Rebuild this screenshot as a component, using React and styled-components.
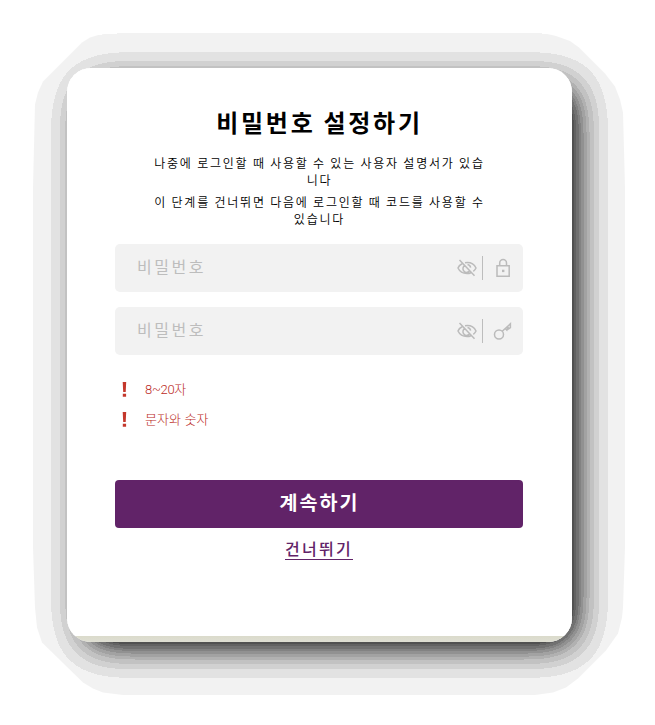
import React from 'react';
import styled, { createGlobalStyle } from 'styled-components';

const GlobalStyle = createGlobalStyle`
  * { box-sizing: border-box; }
  html, body { margin: 0; background: #fff; }
  body { font-family: "Noto Sans CJK KR", sans-serif; overflow: hidden; }
`;

const Page = styled.main`
  width: 655px;
  height: 725px;
  padding: 67.5px 0 0 67px;
  overflow: hidden;
  position: relative;
  z-index: 0;
`;

const Card = styled.section`
  position: relative;
  width: 504.5px;
  height: 574px;
  border-radius: 24px;

  &::before {
    content: "";
    position: absolute;
    inset: 0;
    z-index: -1;
    border-radius: 24px;
    box-shadow: 10px 10px 40px #000;
    filter: url(#shadow-steps);
    clip-path: polygon(
      -34px 120px, -32px 37px, -29px 25px, -24px 14px, 15px -25px, 23px -30px, 33px -33px, 46px -34.5px,
      476px -34.5px, 489px -31.5px, 503px -26.5px, 512px -20px, 538px 6px, 548px 19px, 553px 32px, 556px 45px, 558px 120px,
      558px 480px, 556px 540px, 555px 550px, 551px 566px, 539px 583px, 511px 611px, 499px 620px, 486px 625px, 468px 627.5px,
      56px 627.5px, 36px 625px, 26px 621px, 16px 615px, -25px 575px, -30px 560px, -32px 540px, -34px 480px
    );
  }
`;

const CardBody = styled.div`
  height: 100%;
  padding: 35.5px 48.5px 0 48px;
  border-radius: 24px;
  background: linear-gradient(#fff 568.5px, #dbdbcc 568.5px, #dfdfd3 100%);
  display: flex;
  flex-direction: column;
  align-items: stretch;
`;

const Title = styled.h1`
  margin: 0;
  height: 38px;
  line-height: 38px;
  font-size: 24px;
  font-weight: 700;
  letter-spacing: 2.7px;
  text-align: center;
  padding-left: 1px;
  color: #000;
`;

const Description = styled.p`
  margin: ${({ $first }) => ($first ? '13px' : '5px')} 0 0;
  padding-left: 1px;
  font-size: 12px;
  font-weight: 350;
  line-height: 17px;
  letter-spacing: 1.78px;
  text-align: center;
  white-space: nowrap;
  color: #000;
`;

const Fields = styled.div`
  margin-top: 17px;
  display: grid;
  gap: 15px;
`;

const Field = styled.label`
  height: 48px;
  border-radius: 5px;
  background: #f2f2f2;
  padding: 0 10px 0 22px;
  display: flex;
  align-items: center;
  color: #bcbcbc;
`;

const Input = styled.input`
  flex: 1;
  min-width: 0;
  height: 30px;
  padding: 0 0 4px;
  border: 0;
  outline: 0;
  background: transparent;
  font: 400 16px "Noto Sans CJK KR", sans-serif;
  letter-spacing: 2.5px;
  color: #555;

  &::placeholder { color: #bdbdbd; opacity: 1; }
`;

const Divider = styled.span`
  width: 1px;
  height: 24px;
  margin: 0 10px 0 5px;
  background: #bdbdbd;
`;

const Icon = styled.svg`
  width: 20px;
  height: 20px;
  flex: none;
  fill: none;
  stroke: #bbb;
  stroke-width: 1.5;
`;

const Rules = styled.ul`
  list-style: none;
  margin: 19px 0 0;
  padding: 0;
`;

const Rule = styled.li`
  height: 30px;
  display: flex;
  align-items: center;
  padding-left: 7px;
  gap: 18px;
  font-family: Roboto, "Noto Sans CJK KR", sans-serif;
  font-size: 13px;
  font-weight: 300;
  letter-spacing: ${({ $spacing }) => $spacing}px;
  color: #bb2a1d;
`;

const RuleText = styled.span`
  padding-bottom: 2px;
`;

const Bang = styled.svg`
  width: 5px;
  height: 15px;
  margin-top: 1px;
  fill: #c4382c;
`;

const Submit = styled.button`
  margin-top: 46px;
  height: 48px;
  border: 0;
  border-radius: 4px;
  padding: 0 0 5px 1px;
  background: #612368;
  color: #fff;
  font: 700 19.5px "Noto Sans CJK KR", sans-serif;
  letter-spacing: 2px;
`;

const Skip = styled.a`
  align-self: center;
  margin-top: 10px;
  height: 22px;
  line-height: 20px;
  border-bottom: 1px solid #612368;
  font-size: 16px;
  font-weight: 500;
  letter-spacing: 2.3px;
  color: #612368;
`;

const HiddenDefs = styled.svg`
  position: absolute;
  width: 0;
  height: 0;
`;

// Coverage at which each darker step of the card shadow begins.
const stops = [0.0078, 0.0926, 0.191, 0.274, 0.354, 0.411, 0.47, 0.52, 0.56, 0.608, 0.646, 0.7];
const shadowTable = Array.from({ length: 256 }, (_, i) => {
  const level = stops.filter((s) => i / 255 >= s).length;
  return level === 0 ? 0 : ((level * 16 - 2) / 255).toFixed(4);
}).join(' ');

const EyeOff = () => (
  <Icon viewBox="0 0 20 20">
    <path d="M5.500 5.500C3.500 6.400 1.800 8 1 10c1.600 3.400 5 5.500 9 5.500 1.500 0 2.800-.3 4-.8M8 4.700c5-.8 9.100 1.300 11 5.300-.6 1.300-1.500 2.500-2.700 3.300M12.900 12.400a3.700 3.700 0 1 1-5-5M10.500 6.500A3.600 3.600 0 0 1 13.600 9.600M2.500 2l15 15.800" />
  </Icon>
);

const Lock = () => (
  <Icon viewBox="0 0 20 20">
    <path d="M4 7.800h12.200v10.400H4zM6.700 7.800V4.900a3.400 3.400 0 0 1 6.800 0v2.900" />
    <path d="M9 11.700h2.400v2.400H9z" fill="#bbb" stroke="none" />
  </Icon>
);

const Key = () => (
  <Icon viewBox="0 0 20 20">
    <circle cx="6" cy="13.500" r="4.500" />
    <path d="M9.200 10.300l8.200-7.500v3.700l-2 1.500-.3-1.700-1.200 2.900-1.700-2" />
  </Icon>
);

const Requirement = ({ spacing, children }) => (
  <Rule $spacing={spacing}>
    <Bang viewBox="0 0 5 15">
      <path d="M.7 0h3.500l-.5 10H1.200zM.8 11.700h3.300v3H.8z" />
    </Bang>
    <RuleText>{children}</RuleText>
  </Rule>
);

export default function App() {
  return (
    <Page>
      <GlobalStyle />
      <HiddenDefs aria-hidden="true">
        <filter id="shadow-steps" x="-20%" y="-20%" width="140%" height="140%">
          <feComponentTransfer>
            <feFuncA type="discrete" tableValues={shadowTable} />
          </feComponentTransfer>
        </filter>
      </HiddenDefs>
      <Card>
        <CardBody>
          <Title>비밀번호 설정하기</Title>
          <Description $first>
            나중에 로그인할 때 사용할 수 있는 사용자 설명서가 있습<br />니다
          </Description>
          <Description>
            이 단계를 건너뛰면 다음에 로그인할 때 코드를 사용할 수<br />있습니다
          </Description>
          <Fields>
            <Field>
              <Input type="password" placeholder="비밀번호" />
              <EyeOff />
              <Divider />
              <Lock />
            </Field>
            <Field>
              <Input type="password" placeholder="비밀번호" />
              <EyeOff />
              <Divider />
              <Key />
            </Field>
          </Fields>
          <Rules>
            <Requirement spacing={-0.3}>8~20자</Requirement>
            <Requirement spacing={0.1}>문자와 숫자</Requirement>
          </Rules>
          <Submit type="button">계속하기</Submit>
          <Skip>건너뛰기</Skip>
        </CardBody>
      </Card>
    </Page>
  );
}
